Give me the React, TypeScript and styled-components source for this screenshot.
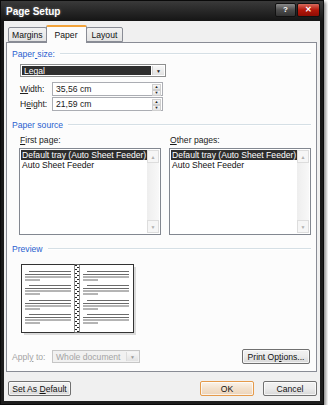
import styled, {createGlobalStyle} from "styled-components";

const GlobalStyle = createGlobalStyle`
  html, body {
    margin: 0;
    padding: 0;
    background: #ffffff;
  }
  body {
    font-family: "Liberation Sans", Arial, sans-serif;
    font-size: 8.6px;
    color: #1a1a1a;
  }
`;

const Window = styled.div`
  width: 324px;
  height: 405px;
  box-sizing: border-box;
  display: flex;
  flex-direction: column;
  background: linear-gradient(to bottom, #3a3a3a 0px, #151515 20px, #1e1e1e 100%);
  border: 1px solid #0a0a0a;
  box-shadow: 2px 2px 3px rgba(0, 0, 0, 0.45);
  padding: 0 3px 3px 3px;
`;

const TitleBar = styled.div`
  height: 20px;
  display: flex;
  align-items: center;
  justify-content: space-between;
  padding-left: 2px;
`;

const Title = styled.span`
  color: #ffffff;
  font-weight: bold;
  font-size: 10px;
  text-shadow: 0 0 3px rgba(255, 255, 255, 0.35);
`;

const Caption = styled.div`
  display: flex;
  gap: 1px;
  margin-top: -3px;
`;

const CaptionButton = styled.div<{$close?: boolean}>`
  width: ${p => (p.$close ? 21 : 19)}px;
  height: 12px;
  display: flex;
  align-items: center;
  justify-content: center;
  color: #ffffff;
  font-size: 8px;
  font-weight: bold;
  border: 1px solid #111;
  border-radius: 2px;
  background: ${p =>
    p.$close
      ? "linear-gradient(to bottom, #d86a5c, #b3170a 50%, #8e0d04)"
      : "linear-gradient(to bottom, #8a8a8a, #4c4c4c 50%, #333)"};
`;

const Client = styled.div`
  flex: 1;
  background: #f0f0f0;
  display: flex;
  flex-direction: column;
  padding: 2px 3px 0 2px;
`;

const TabRow = styled.div`
  display: flex;
  align-items: flex-end;
  height: 19px;
  padding-left: 2px;
`;

const Tab = styled.div<{$active?: boolean; $pad: number}>`
  height: ${p => (p.$active ? 18 : 15)}px;
  box-sizing: border-box;
  padding: 0 ${p => p.$pad}px;
  display: flex;
  align-items: center;
  border: 1px solid #898c95;
  border-bottom: ${p => (p.$active ? "none" : "1px solid #898c95")};
  border-top: ${p => (p.$active ? "2px solid #f2a33a" : "1px solid #898c95")};
  margin-left: ${p => (p.$active ? -1 : 0)}px;
  margin-right: ${p => (p.$active ? -1 : 0)}px;
  background: ${p => (p.$active ? "#fcfcfc" : "linear-gradient(to bottom, #f2f2f2, #e3e3e3)")};
  border-radius: 2px 2px 0 0;
  position: relative;
  z-index: ${p => (p.$active ? 2 : 1)};
  margin-bottom: ${p => (p.$active ? -1 : 0)}px;
  color: #111;
`;

const Panel = styled.div`
  height: 330px;
  box-sizing: border-box;
  border: 1px solid #898c95;
  background: #fcfcfc;
  padding: 5px 5px 0 5px;
  display: flex;
  flex-direction: column;
`;

const GroupHeader = styled.div`
  display: flex;
  align-items: center;
  gap: 5px;
  color: #2a5fcf;
  height: 11px;
  &::after {
    content: "";
    flex: 1;
    height: 0;
    border-top: 1px solid #d5dfe5;
    border-bottom: 1px solid #ffffff;
  }
`;

const Indent = styled.div`
  padding-left: 8px;
  display: flex;
  flex-direction: column;
`;

const Combo = styled.div<{$disabled?: boolean; $width: number}>`
  width: ${p => p.$width}px;
  height: 13px;
  box-sizing: border-box;
  border: 1px solid ${p => (p.$disabled ? "#c6c6c6" : "#8e8f8f")};
  background: ${p => (p.$disabled ? "#f1f1f1" : "#ffffff")};
  display: flex;
  padding: 1px;
  color: ${p => (p.$disabled ? "#a4a4a4" : "#111")};
`;

const ComboValue = styled.div<{$selected?: boolean}>`
  flex: 1;
  display: flex;
  align-items: center;
  padding-left: 2px;
  background: ${p => (p.$selected ? "#2e2e2e" : "transparent")};
  color: ${p => (p.$selected ? "#ffffff" : "inherit")};
`;

const SmallButton = styled.div<{$disabled?: boolean}>`
  width: 11px;
  display: flex;
  align-items: center;
  justify-content: center;
  margin-left: 1px;
  border-left: 1px solid ${p => (p.$disabled ? "#dcdcdc" : "#d0d0d0")};
  background: linear-gradient(to bottom, #f7f7f7, #e2e2e2);
  font-size: 5px;
  color: ${p => (p.$disabled ? "#9a9a9a" : "#222")};
`;

const FieldRow = styled.div`
  display: flex;
  align-items: center;
  height: 15px;
`;

const FieldLabel = styled.span`
  width: 32px;
  color: #222;
`;

const Spin = styled.div`
  width: 111px;
  height: 14px;
  box-sizing: border-box;
  border: 1px solid #abadb3;
  background: #ffffff;
  display: flex;
`;

const SpinText = styled.div`
  flex: 1;
  display: flex;
  align-items: center;
  padding-left: 3px;
`;

const SpinArrows = styled.div`
  width: 9px;
  margin: 1px;
  display: flex;
  flex-direction: column;
  & > span {
    flex: 1;
    display: flex;
    align-items: center;
    justify-content: center;
    font-size: 4px;
    line-height: 1;
    background: linear-gradient(to bottom, #f7f7f7, #e4e4e4);
    border: 1px solid #cfcfcf;
    color: #222;
  }
`;

const SourceGrid = styled.div`
  display: grid;
  grid-template-columns: 142px 142px;
  column-gap: 8px;
  padding-left: 7px;
`;

const SourceCol = styled.div`
  display: flex;
  flex-direction: column;
  gap: 3px;
  & > span {
    padding-left: 1px;
  }
`;

const ListBox = styled.div`
  height: 87px;
  box-sizing: border-box;
  border: 1px solid #828790;
  background: #ffffff;
  display: flex;
  padding: 1px;
`;

const ListItems = styled.div`
  flex: 1;
  display: flex;
  flex-direction: column;
`;

const ListItem = styled.div<{$selected?: boolean}>`
  height: 10px;
  line-height: 10px;
  padding-left: 1px;
  white-space: nowrap;
  background: ${p => (p.$selected ? "#2e2e2e" : "transparent")};
  color: ${p => (p.$selected ? "#ffffff" : "#111")};
`;

const ScrollBar = styled.div`
  width: 12px;
  display: flex;
  flex-direction: column;
  justify-content: space-between;
  background: linear-gradient(to right, #eeeeee, #f8f8f8);
  & > span {
    height: 11px;
    display: flex;
    align-items: center;
    justify-content: center;
    font-size: 5px;
    color: #b0b0b0;
    border: 1px solid #dddddd;
    background: #f6f6f6;
  }
`;

const Underline = styled.span`
  text-decoration: underline;
`;

const PreviewArea = styled.div`
  padding-left: 9px;
  margin-top: 10px;
  height: 72px;
`;

const ApplyRow = styled.div`
  display: flex;
  align-items: center;
  margin-top: 13px;
  padding-right: 1px;
`;

const ApplyLabel = styled.span`
  width: 40px;
  color: #a4a4a4;
`;

const Button = styled.div<{$default?: boolean; $width: number}>`
  width: ${p => p.$width}px;
  height: 15px;
  box-sizing: border-box;
  display: flex;
  align-items: center;
  justify-content: center;
  border: 1px solid ${p => (p.$default ? "#e59a4a" : "#707070")};
  border-radius: 2px;
  background: ${p =>
    p.$default
      ? "linear-gradient(to bottom, #fbf3ea, #f3e1cd 50%, #ecd3b8)"
      : "linear-gradient(to bottom, #f2f2f2, #ebebeb 50%, #d7d7d7)"};
  box-shadow: inset 0 0 0 1px rgba(255, 255, 255, 0.7);
  color: #111;
`;

const Footer = styled.div`
  display: flex;
  align-items: center;
  gap: 9px;
  margin-top: 9px;
  padding-left: 2px;
`;

const Spacer = styled.div`
  flex: 1;
`;

const BookPreview = () => {
    const paraTops = [7, 21, 36, 50];
    const page = (x0: number) =>
        paraTops.map(t => (
            <g key={x0 + "-" + t} stroke="#6b6b6b" strokeWidth="1">
                <line x1={x0 + 4} y1={t + 0.5} x2={x0 + 46} y2={t + 0.5}/>
                <line x1={x0} y1={t + 3.5} x2={x0 + 46} y2={t + 3.5}/>
                <line x1={x0} y1={t + 6} x2={x0 + 46} y2={t + 6}/>
                <line x1={x0} y1={t + 9} x2={x0 + 15} y2={t + 9}/>
            </g>
        ));
    const rings = [];
    for (let y = 1; y < 68; y += 2) {
        rings.push(<rect key={y} x={y % 4 === 1 ? 54 : 56} y={y} width="2" height="1" fill="#222"/>);
    }
    return (
        <svg width="116" height="72" viewBox="0 0 116 72">
            <rect x="3" y="3" width="112" height="68" fill="#b8b8b8" opacity="0.5"/>
            <rect x="0.5" y="0.5" width="112" height="68" fill="#ffffff" stroke="#333"/>
            {page(4)}
            {page(62)}
            <rect x="53.5" y="0.5" width="5" height="68" fill="#ffffff" stroke="#444" strokeWidth="0.6"/>
            {rings}
        </svg>
    );
};

const App = () => {
    return (
        <>
            <GlobalStyle/>
            <Window>
                <TitleBar>
                    <Title>Page Setup</Title>
                    <Caption>
                        <CaptionButton>?</CaptionButton>
                        <CaptionButton $close>✕</CaptionButton>
                    </Caption>
                </TitleBar>
                <Client>
                    <TabRow>
                        <Tab $pad={3}>Margins</Tab>
                        <Tab $active $pad={8}>Paper</Tab>
                        <Tab $pad={5}>Layout</Tab>
                    </TabRow>
                    <Panel>
                        <GroupHeader><span>Paper<Underline> </Underline>size:</span></GroupHeader>
                        <Indent style={{marginTop: 5}}>
                            <Combo $width={146}>
                                <ComboValue $selected>Legal</ComboValue>
                                <SmallButton>▼</SmallButton>
                            </Combo>
                            <FieldRow style={{marginTop: 4}}>
                                <FieldLabel><Underline>W</Underline>idth:</FieldLabel>
                                <Spin>
                                    <SpinText>35,56 cm</SpinText>
                                    <SpinArrows><span>▲</span><span>▼</span></SpinArrows>
                                </Spin>
                            </FieldRow>
                            <FieldRow>
                                <FieldLabel>H<Underline>e</Underline>ight:</FieldLabel>
                                <Spin>
                                    <SpinText>21,59 cm</SpinText>
                                    <SpinArrows><span>▲</span><span>▼</span></SpinArrows>
                                </Spin>
                            </FieldRow>
                        </Indent>
                        <div style={{marginTop: 8}}>
                            <GroupHeader>Paper source</GroupHeader>
                        </div>
                        <SourceGrid style={{marginTop: 5}}>
                            <SourceCol>
                                <span><Underline>F</Underline>irst page:</span>
                                <ListBox>
                                    <ListItems>
                                        <ListItem $selected>Default tray (Auto Sheet Feeder)</ListItem>
                                        <ListItem>Auto Sheet Feeder</ListItem>
                                    </ListItems>
                                    <ScrollBar><span>▲</span><span>▼</span></ScrollBar>
                                </ListBox>
                            </SourceCol>
                            <SourceCol>
                                <span><Underline>O</Underline>ther pages:</span>
                                <ListBox>
                                    <ListItems>
                                        <ListItem $selected>Default tray (Auto Sheet Feeder)</ListItem>
                                        <ListItem>Auto Sheet Feeder</ListItem>
                                    </ListItems>
                                    <ScrollBar><span>▲</span><span>▼</span></ScrollBar>
                                </ListBox>
                            </SourceCol>
                        </SourceGrid>
                        <div style={{marginTop: 8}}>
                            <GroupHeader>Preview</GroupHeader>
                        </div>
                        <PreviewArea>
                            <BookPreview/>
                        </PreviewArea>
                        <ApplyRow>
                            <ApplyLabel>Appl<Underline>y</Underline> to:</ApplyLabel>
                            <Combo $width={88} $disabled>
                                <ComboValue>Whole document</ComboValue>
                                <SmallButton $disabled>▼</SmallButton>
                            </Combo>
                            <Spacer/>
                            <Button $width={68}><span>Print Op<Underline>t</Underline>ions...</span></Button>
                        </ApplyRow>
                    </Panel>
                    <Footer>
                        <Button $width={63}><span>Set As <Underline>D</Underline>efault</span></Button>
                        <Spacer/>
                        <Button $width={54} $default>OK</Button>
                        <Button $width={54}>Cancel</Button>
                    </Footer>
                </Client>
            </Window>
        </>
    );
};

export default App;
